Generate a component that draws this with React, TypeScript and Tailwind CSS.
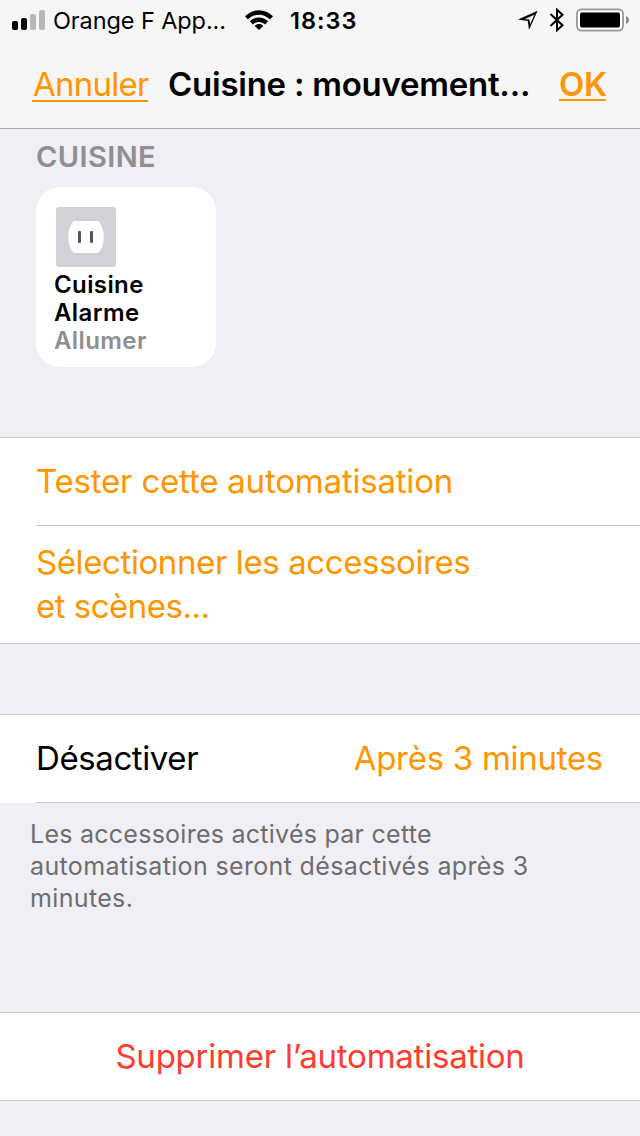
import React from 'react';

const StatusBar: React.FC = () => (
  <div className="flex h-10 items-center pl-3 pr-[11px]">
    <svg className="mr-2 block" width="33" height="20" viewBox="0 0 33 20">
      <rect x="0" y="11" width="6" height="9" rx="2" fill="#000" />
      <rect x="9" y="8" width="6" height="12" rx="2" fill="#000" />
      <rect x="18" y="4" width="6" height="16" rx="2" fill="#b8b8b8" />
      <rect x="27" y="0" width="6" height="20" rx="2" fill="#b8b8b8" />
    </svg>
    <span className="w-[192px] whitespace-nowrap pt-0.5 text-[23.5px] leading-none tracking-[-0.1px]">Orange F App...</span>
    <svg className="block" width="28" height="20" viewBox="0 0 28 20">
      <path d="M0 6.3C8 -1.9 20 -1.9 28 6.3L25 9.5C18.8 3.2 9.2 3.2 3 9.5Z" />
      <path d="M4.9 11.3C10 6.1 18 6.1 23.1 11.3L20.1 14.5C16.8 11 11.2 11 7.9 14.5Z" />
      <path d="M9.7 16C12.2 13.4 15.8 13.4 18.3 16L14 20Z" />
    </svg>
    <span className="ml-[17px] whitespace-nowrap pt-0.5 text-[23.5px] font-semibold leading-none tracking-[1px]">18:33</span>
    <div className="ml-auto flex items-center">
      <svg className="block" width="20" height="20" viewBox="0 0 20 20">
        <path d="M0 9.6L19.6 0.8L11 20L9.8 10.9Z M6.5 9.2L11.4 9.6L12.1 14.2L16.4 4.7Z" fillRule="evenodd" />
      </svg>
      <svg className="ml-[11px] block" width="16" height="24" viewBox="0 0 16 24">
        <path d="M1.5 6L13.5 17.2L8 22.2V1.8L13.5 6.8L1.5 18" fill="none" stroke="#000" strokeWidth="2" />
      </svg>
      <svg className="ml-[11px] block" width="53" height="24" viewBox="0 0 53 24">
        <rect x="0.9" y="1.4" width="46.2" height="21.2" rx="4.5" fill="#fff" stroke="#979797" strokeWidth="1.8" />
        <rect x="4" y="4.5" width="40" height="15" rx="2" fill="#000" />
        <path d="M50 8C54 9.2 54 14.8 50 16Z" fill="#8c8c8c" />
      </svg>
    </div>
  </div>
);

const NavBar: React.FC = () => (
  <div className="flex h-[88px] items-start pl-8 pr-[34px] pt-[25px] text-[33px] leading-[38px]">
    <button className="h-[37px] w-[116px] whitespace-nowrap border-b-2 border-[#ff9500] pl-px text-left tracking-[-0.75px] text-[#ff9500]">
      Annuler
    </button>
    <h1 className="ml-5 whitespace-nowrap font-semibold tracking-[-0.25px]">Cuisine : mouvement...</h1>
    <button className="ml-auto h-9 w-[47px] whitespace-nowrap border-b-2 border-[#ff9500] text-left font-semibold tracking-[-0.3px] text-[#ff9500]">
      OK
    </button>
  </div>
);

const AccessoryCard: React.FC = () => (
  <div className="h-[180px] w-[180px] rounded-[24px] bg-white pl-[18px] pt-5">
    <svg className="ml-0.5 block" width="60" height="60" viewBox="0 0 60 60">
      <rect width="60" height="60" rx="3" fill="#d1d1d6" />
      <path d="M19 14H41Q43 14 44 16C49 24 49 36 44 44Q43 46 41 46H19Q17 46 16 44C11 36 11 24 16 16Q17 14 19 14Z" fill="#fff" />
      <rect x="22" y="24" width="3" height="12" rx="1" fill="#555" />
      <rect x="34" y="24" width="3" height="12" rx="1" fill="#555" />
    </svg>
    <div className="mt-1 text-[24px] font-semibold leading-7 tracking-[0.4px]">
      <p>Cuisine</p>
      <p>Alarme</p>
      <p className="text-[#8e8e93]">Allumer</p>
    </div>
  </div>
);

const App: React.FC = () => {
  return (
    <div className="h-[1136px] w-[640px] overflow-hidden bg-[#efeff4] font-['Inter',sans-serif] text-black">
      <header className="border-b border-[#a7a7ab] bg-[#f6f6f6]">
        <StatusBar />
        <NavBar />
      </header>

      <section className="h-[308px] px-9 pt-3">
        <h2 className="mb-[14px] text-[29px] font-semibold leading-8 tracking-[0.4px] text-[#8e8e93]">CUISINE</h2>
        <AccessoryCard />
      </section>

      <section className="border-y border-[#c8c7cc] bg-white pl-9 text-[33px] text-[#ff9500]">
        <button className="flex h-22 w-full items-center whitespace-nowrap border-b border-[#c8c7cc]">
          <span className="tracking-[-0.2px]">Tester cette automatisation</span>
        </button>
        <button className="flex h-[117px] w-full flex-col whitespace-nowrap pt-[14px] text-left leading-[44px]">
          <span className="tracking-[-0.4px]">Sélectionner les accessoires</span>
          <span className="tracking-[-0.5px]">et scènes...</span>
        </button>
      </section>

      <section className="mt-[70px] border-t border-[#c8c7cc]">
        <div className="bg-white pl-9">
          <div className="flex h-22 items-center justify-between whitespace-nowrap border-b border-[#c8c7cc] pr-[37px] text-[33px]">
            <span className="tracking-[-0.4px]">Désactiver</span>
            <span className="tracking-[-0.28px] text-[#ff9500]">Après 3 minutes</span>
          </div>
        </div>
        <p className="h-[209px] whitespace-nowrap pl-[30px] pt-[15px] text-[25px] leading-8 text-[#6d6d72]">
          <span className="block tracking-[0.26px]">Les accessoires activés par cette</span>
          <span className="block tracking-[0.35px]">automatisation seront désactivés après 3</span>
          <span className="block tracking-[0.35px]">minutes.</span>
        </p>
      </section>

      <section className="border-y border-[#c8c7cc] bg-white">
        <button className="flex h-[87px] w-full items-center justify-center whitespace-nowrap text-[33px] text-[#ff3b30]">
          <span className="tracking-[-0.23px]">Supprimer l’automatisation</span>
        </button>
      </section>
    </div>
  );
};

export default App;
